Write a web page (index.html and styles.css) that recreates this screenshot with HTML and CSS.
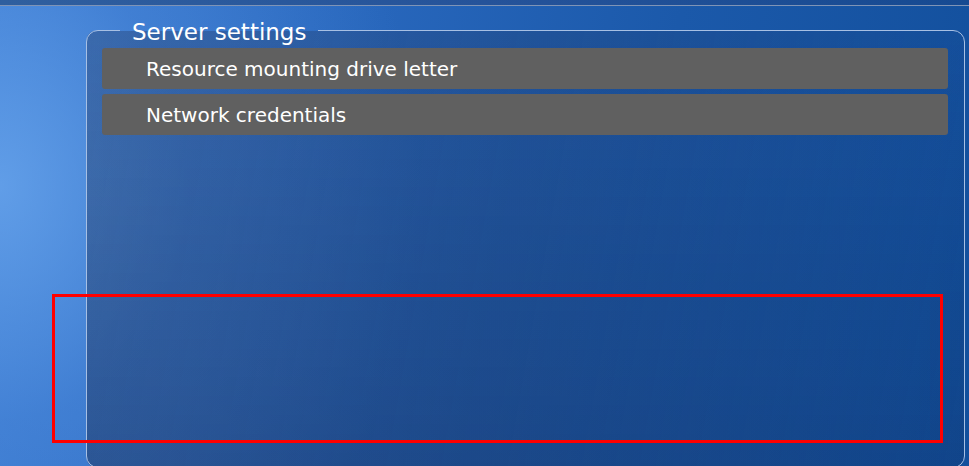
FILE: index.html
```html
<!DOCTYPE html>
<html>
<head>
<meta charset="utf-8">
<link rel="stylesheet" href="styles.css">
</head>
<body>
<div class="screen">
  <div class="topbar"></div>
  <fieldset class="panel">
    <legend class="panel-title">Server settings</legend>
    <div class="item">Resource mounting drive letter</div>
    <div class="item">Network credentials</div>
  </fieldset>
  <div class="highlight"></div>
</div>
</body>
</html>
```
FILE: styles.css
```css
html, body {
  margin: 0;
  padding: 0;
}
body {
  width: 969px;
  height: 466px;
  overflow: hidden;
  font-family: "DejaVu Sans", "Liberation Sans", sans-serif;
}
.screen {
  position: relative;
  width: 969px;
  height: 466px;
  overflow: hidden;
  display: flex;
  flex-direction: column;
  background:
    radial-gradient(ellipse 420px 520px at 0% 40%, rgba(110,170,240,0.75) 0%, rgba(90,150,230,0.35) 45%, rgba(60,120,210,0) 100%),
    linear-gradient(100deg, #3a7ad0 0%, #2a69bf 30%, #1b59aa 65%, #124f9c 100%);
}
.topbar {
  height: 5px;
  flex: none;
  background: linear-gradient(90deg, #2f5f9f 0%, #25539a 50%, #164a92 100%);
  border-bottom: 1px solid #7f94b6;
}
.panel {
  flex: none;
  margin: 8px 4px 0 86px;
  width: 879px;
  height: 454px;
  box-sizing: border-box;
  border: 1px solid #a7c0e4;
  border-radius: 12px;
  padding: 2px 16px 0 15px;
  background:
    linear-gradient(180deg, rgba(10,25,60,0) 0%, rgba(10,25,60,0.18) 100%),
    linear-gradient(100deg, rgba(40,70,120,0.45) 0%, rgba(30,60,110,0.35) 50%, rgba(15,70,150,0.12) 100%);
  min-inline-size: 0;
}
.panel-title {
  margin-left: 18px;
  padding: 4px 12px 0;
  color: #ffffff;
  font-size: 23px;
  line-height: 28px;
}
.item {
  height: 41px;
  box-sizing: border-box;
  margin-bottom: 5px;
  padding-left: 44px;
  background: #606060;
  border-radius: 3px;
  color: #ffffff;
  font-size: 20px;
  line-height: 43px;
}
.highlight {
  position: absolute;
  left: 52px;
  top: 294px;
  width: 891px;
  height: 149px;
  box-sizing: border-box;
  border: 3px solid #ff0000;
}
```
